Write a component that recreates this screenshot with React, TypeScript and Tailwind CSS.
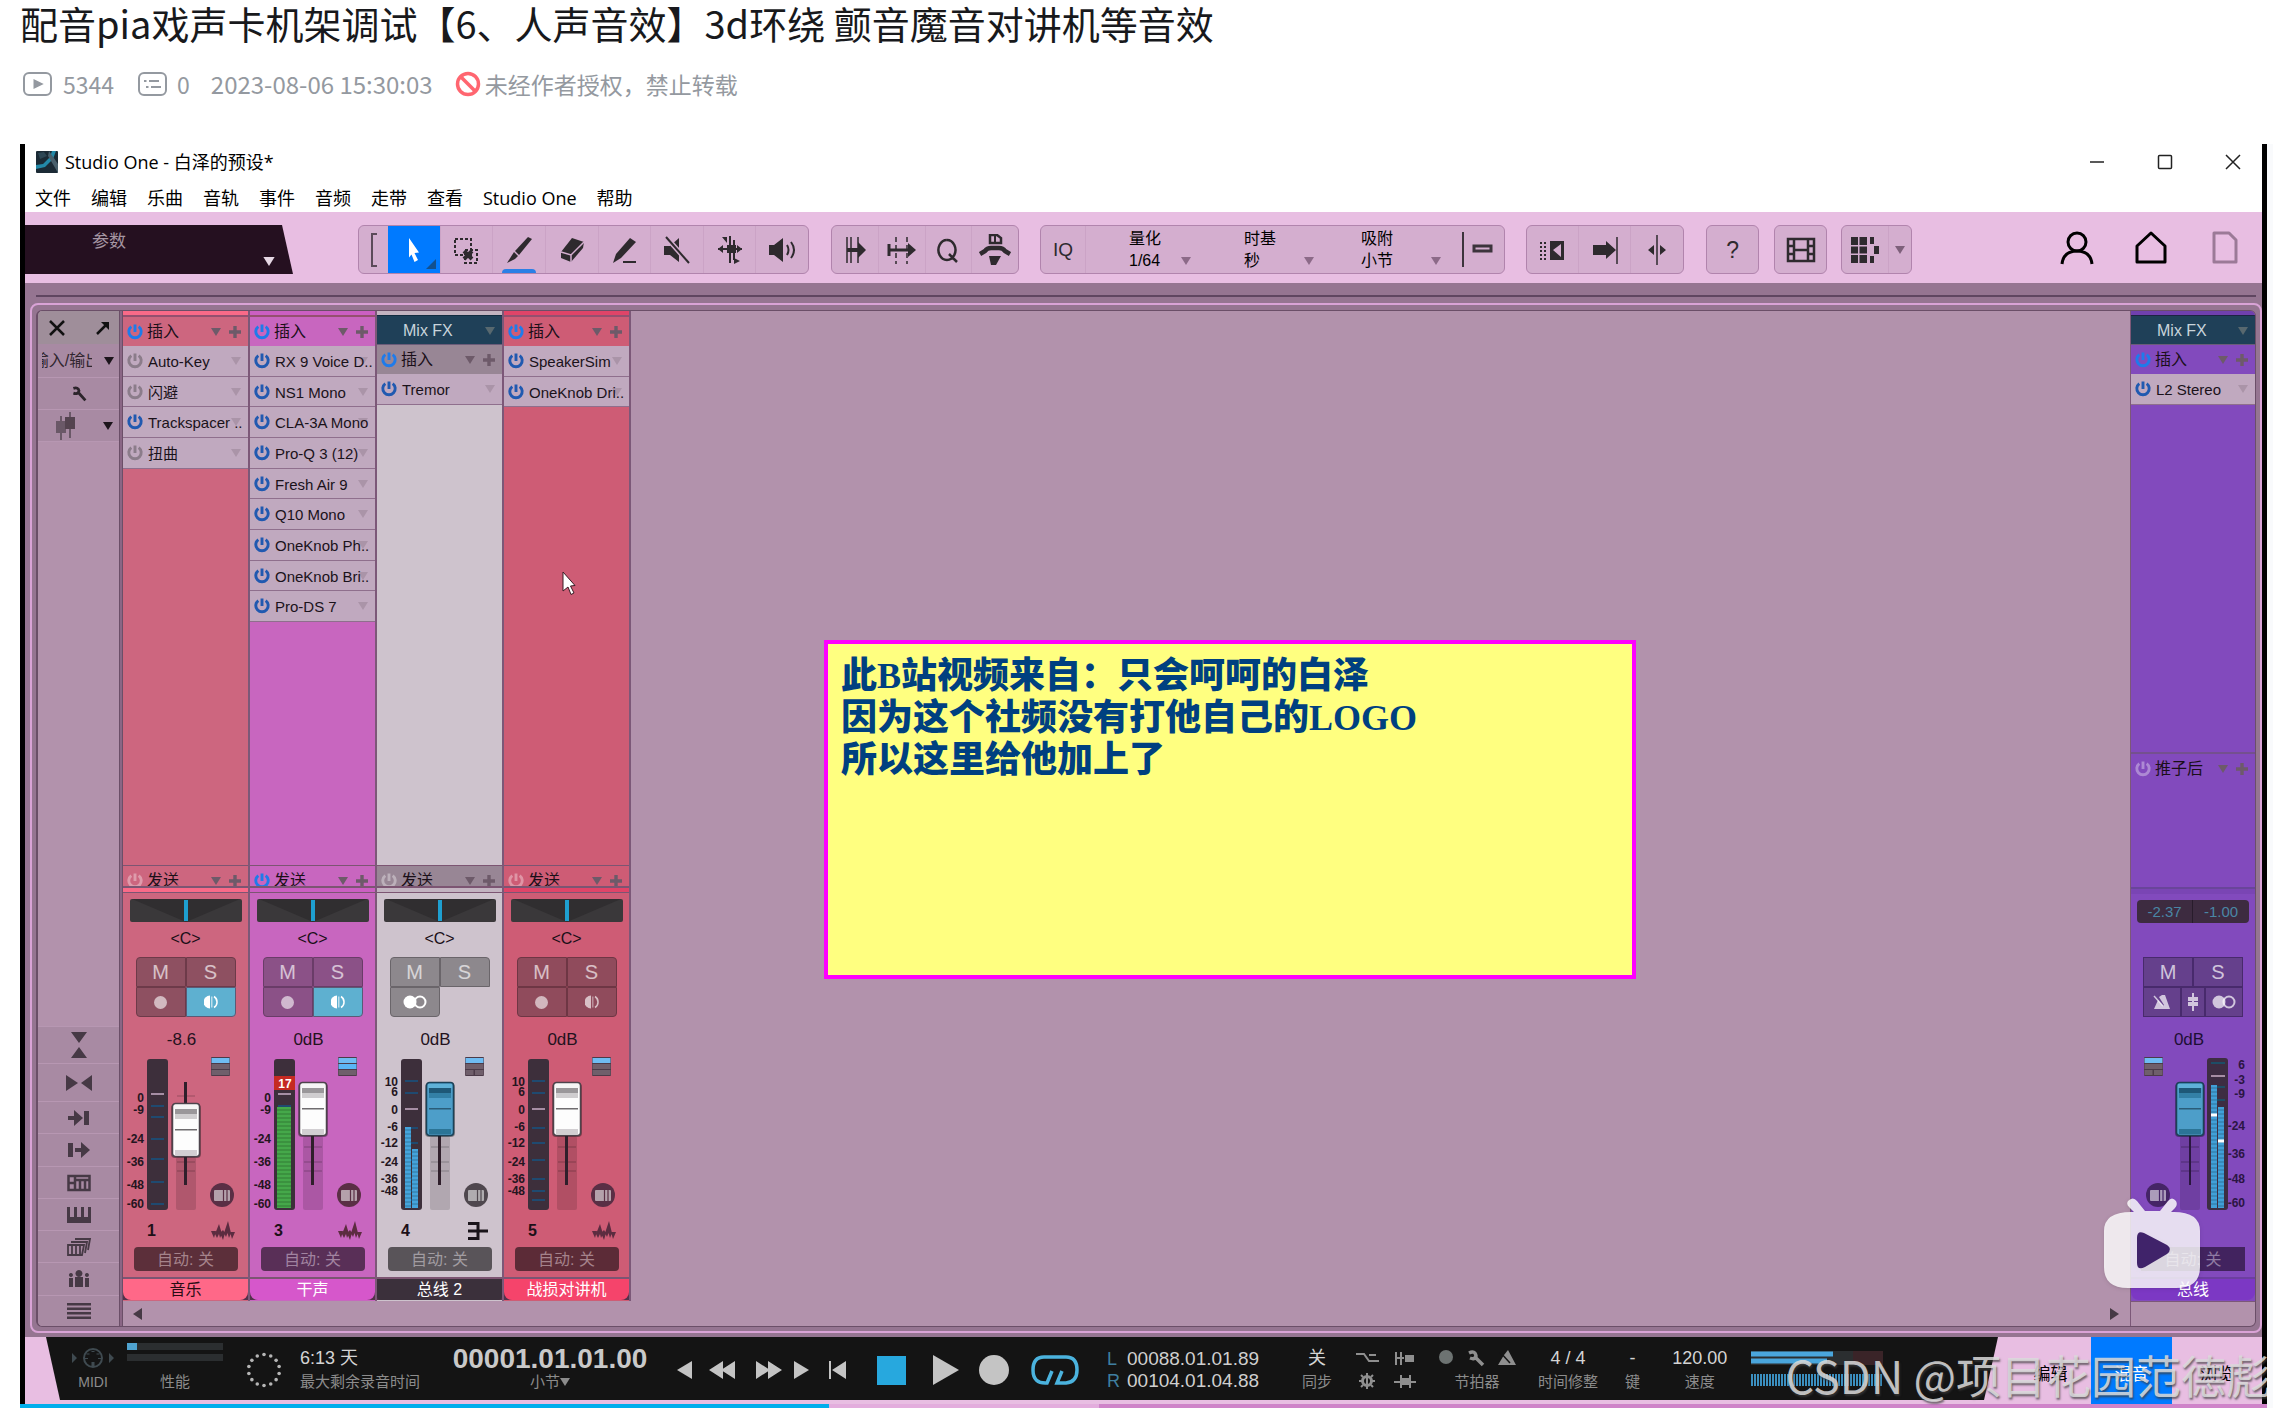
import React from "react";

const CJK = "font-['Noto_Sans_CJK_SC',sans-serif]";
const ARIAL = "font-['Liberation_Sans','Noto_Sans_CJK_SC',sans-serif]";

/* ---------- small glyphs ---------- */

function Power({ className }: { className: string }) {
  return (
    <svg viewBox="0 0 16 16" className={`h-4 w-4 shrink-0 ${className}`} fill="none" stroke="currentColor" strokeWidth="2.900">
      <path d="M4.300 2.600A6.200 6.200 0 1 0 11.700 2.600" />
      <path d="M8 0.500V8" />
    </svg>
  );
}

function Down({ className }: { className: string }) {
  return (
    <svg viewBox="0 0 10 8" className={`h-2 w-2.5 shrink-0 ${className}`} fill="currentColor">
      <path d="M0 0H10L5 8Z" />
    </svg>
  );
}

function Plus({ className }: { className: string }) {
  return (
    <svg viewBox="0 0 12 12" className={`h-3 w-3 shrink-0 ${className}`} fill="currentColor">
      <path d="M4.300 0H7.700V4.300H12V7.700H7.700V12H4.300V7.700H0V4.300H4.300Z" />
    </svg>
  );
}

function Wave() {
  return (
    <svg viewBox="0 0 24 20" className="h-5 w-6" fill="currentColor">
      <path d="M0 10H5L3 17ZM4 13L8 3L11 13L9 17L8 13L6 17ZM9 12L12 9L14 12L12 19ZM13 12L17 0L20 12L18 17L16.500 12L15 16ZM19 11H24L21 18Z" />
    </svg>
  );
}

function Bus() {
  return (
    <svg viewBox="0 0 24 20" className="h-5 w-6" fill="none" stroke="currentColor" strokeWidth="3">
      <path d="M3 2.500H13V17.500H3M3 10H23" />
    </svg>
  );
}

/* ---------- header ---------- */

function Heading() {
  return (
    <header className={`h-36 pl-5 ${CJK}`}>
      <h1 className="h-[46px] text-[38px] leading-[46px] whitespace-nowrap text-[#18191c]">
        配音pia戏声卡机架调试【6、人声音效】3d环绕 颤音魔音对讲机等音效
      </h1>
      <div className="mt-[23px] flex h-[30px] items-center pl-[3px] text-[23px] leading-[30px] whitespace-nowrap text-[#9499a0]">
        <svg viewBox="0 0 29 24" className="mr-[11px] h-6 w-[29px]" fill="none" stroke="currentColor" strokeWidth="2">
          <rect x="1" y="1" width="27" height="22" rx="5" />
          <path d="M11.500 8.500V15.500L18.500 12Z" fill="currentColor" />
        </svg>
        <span>5344</span>
        <svg viewBox="0 0 29 24" className="mr-[10px] ml-6 h-6 w-[29px]" fill="none" stroke="currentColor" strokeWidth="2">
          <rect x="1" y="1" width="27" height="22" rx="5" />
          <path d="M6 9H8.500M11 9H21M8 15H10.500M13 15H23" />
        </svg>
        <span>0</span>
        <time className="ml-[21px] text-[24px]">2023-08-06 15:30:03</time>
        <svg viewBox="0 0 26 26" className="mr-1 ml-[22px] h-[26px] w-[26px]" fill="none" stroke="#ff6670" strokeWidth="3.500">
          <circle cx="13" cy="13" r="10.500" />
          <path d="M6 6L20 20" />
        </svg>
        <span>未经作者授权，禁止转载</span>
      </div>
    </header>
  );
}

function TitleBar() {
  return (
    <div className="flex h-9 items-center bg-white pr-[21px] pl-[11px] text-black">
      <svg viewBox="0 0 22 22" className="h-[22px] w-[22px]">
        <rect width="22" height="22" rx="1" fill="#1b2a35" />
        <path d="M0 14L7 13L14 6L16 0H20L17 8L9 16L0 18Z" fill="#2389a8" />
        <path d="M13 0L22 13V22L18 15L12 5Z" fill="#49606d" />
        <path d="M2 2L8 1L11 5L4 8Z" fill="#2d4654" />
      </svg>
      <span className="ml-[7px] font-['Open_Sans','Noto_Sans_CJK_SC',sans-serif] text-[18px] leading-6">Studio One - 白泽的预设*</span>
      <div className="ml-auto flex items-center gap-[52px]">
        <button aria-label="最小化" className="flex h-4 w-4 items-center">
          <svg viewBox="0 0 16 16" className="h-4 w-4"><path d="M1 8H15" stroke="#222" strokeWidth="1.500" /></svg>
        </button>
        <button aria-label="最大化" className="h-4 w-4">
          <svg viewBox="0 0 16 16" className="h-4 w-4"><rect x="1.500" y="1.500" width="13" height="13" rx="1" fill="none" stroke="#222" strokeWidth="1.500" /></svg>
        </button>
        <button aria-label="关闭" className="h-4 w-4">
          <svg viewBox="0 0 16 16" className="h-4 w-4"><path d="M1 1L15 15M15 1L1 15" stroke="#222" strokeWidth="1.500" /></svg>
        </button>
      </div>
    </div>
  );
}

function MenuBar() {
  const items = ["文件", "编辑", "乐曲", "音轨", "事件", "音频", "走带", "查看", "Studio One", "帮助"];
  return (
    <nav className="flex h-8 items-center gap-5 bg-white pt-1 pl-[10px] font-['Open_Sans','Noto_Sans_CJK_SC',sans-serif] text-[18px] leading-6 text-black">
      {items.map((t) => (
        <button key={t} className="whitespace-nowrap">{t}</button>
      ))}
    </nav>
  );
}

/* ---------- toolbar ---------- */

const tools: { name: string; icon: React.ReactNode }[] = [
  {
    name: "箭头",
    icon: (
      <>
        <path d="M11 4L21 18.500L16.500 19L20 26L16.500 28L13.500 20.500L11 23.500Z" fill="#fff" stroke="none" />
      </>
    ),
  },
  {
    name: "范围",
    icon: (
      <>
        <path d="M5 5H21V21H5Z" strokeDasharray="3 2" fill="none" strokeWidth="2" />
        <path d="M15 16H27V29H15Z" strokeDasharray="3 2" fill="none" strokeWidth="2" />
        <path d="M14 17L22 25M22 17L14 25" strokeWidth="4" />
      </>
    ),
  },
  {
    name: "切割",
    icon: (
      <>
        <path d="M29 5L25 3L12 17L16 21Z" stroke="none" />
        <path d="M11 18L15 22L12 25L4 29Z" stroke="none" />
      </>
    ),
  },
  {
    name: "橡皮",
    icon: (
      <>
        <path d="M16 4L28 8L27 14L15 28L5 24L5 18Z" stroke="none" />
        <path d="M5 18L15 21L28 8M15 21V28" fill="none" stroke="#d4aecf" strokeWidth="1.500" />
      </>
    ),
  },
  {
    name: "绘制",
    icon: (
      <>
        <path d="M22 4L28 8L13 24L5 29L8 20Z" stroke="none" />
        <path d="M15 28H28" strokeWidth="2" />
      </>
    ),
  },
  {
    name: "静音",
    icon: (
      <>
        <path d="M3 12H9L18 4V28L9 21H3Z" stroke="none" />
        <path d="M5 3L28 29" stroke="#d4aecf" strokeWidth="5" />
        <path d="M5 3L28 29" strokeWidth="2" />
      </>
    ),
  },
  {
    name: "弯曲",
    icon: (
      <>
        <path d="M16 2V29M20 6V26M4 15H28" strokeWidth="2" />
        <path d="M4 15L9 11V19ZM28 15L23 11V19ZM8 3H13V9ZM20 24V30L26 27Z" stroke="none" />
        <path d="M13 11H22V19H13Z" stroke="none" />
      </>
    ),
  },
  {
    name: "试听",
    icon: (
      <>
        <path d="M3 11H8L17 4V28L8 21H3Z" stroke="none" />
        <path d="M21 11Q24 16 21 21M25 8Q31 16 25 24" fill="none" strokeWidth="2" />
      </>
    ),
  },
];

function ToolIcon({ children }: { children: React.ReactNode }) {
  return (
    <svg viewBox="0 0 32 32" className="h-8 w-8" fill="#2e2a2e" stroke="#2e2a2e" strokeWidth="2">
      {children}
    </svg>
  );
}

const group = "flex h-[49px] shrink-0 overflow-hidden rounded-md border border-[#b184ad] bg-[#d4aecf] text-[#2e2a2e]";
const cell = "flex items-center justify-center border-r border-[#cba3c6] last:border-r-0";

function SnapField({ label, value, className }: { label: string; value: string; className: string }) {
  return (
    <button className={`grid grid-cols-[auto_10px] content-center items-center text-left text-[16px] leading-[22px] text-black ${className}`}>
      <span>{label}</span>
      <span />
      <span>{value}</span>
      <Down className="text-[#8c6a88]" />
    </button>
  );
}

function Toolbar() {
  return (
    <div className={`flex h-[71px] items-start overflow-hidden bg-[#e8bee2] pt-[13px] ${ARIAL}`}>
      <button className="flex h-[49px] w-[268px] shrink-0 justify-between bg-[#251020] pt-[5px] pr-[17px] pb-[8px] pl-[67px] text-[17px] leading-6 text-[#a696a3] [clip-path:polygon(0_0,257px_0,268px_100%,0_100%)]">
        <span>参数</span>
        <Down className="mt-auto h-[9px] w-[14px] text-[#e6d8e4]" />
      </button>
      <div className={`ml-[65px] w-[451px] ${group}`}>
        <svg viewBox="0 0 29 47" className="h-[47px] w-[29px] shrink-0" fill="none" stroke="#5c4a5a" strokeWidth="2">
          <path d="M18 8H13V40H18" />
        </svg>
        {tools.map((t, i) => (
          <button
            key={t.name}
            aria-label={t.name}
            className={`relative flex-1 ${cell} ${i === 0 ? "bg-[#007aff]" : ""}`}
          >
            <ToolIcon>{t.icon}</ToolIcon>
            {i === 0 && (
              <svg viewBox="0 0 10 10" className="absolute right-1 bottom-1 h-2.5 w-2.5"><path d="M10 0V10H0Z" fill="#12508f" /></svg>
            )}
            {i === 2 && <span className="absolute bottom-0 h-1 w-[34px] rounded-t bg-[#2b7fe6]" />}
          </button>
        ))}
      </div>
      <div className={`ml-[22px] w-[188px] ${group}`}>
        <button aria-label="滚动" className={`flex-1 ${cell}`}>
          <ToolIcon><path d="M8 3V29M12 3V29M19 3V29" strokeWidth="1.500" /><path d="M8 14H19V8L27 16L19 24V18H8Z" stroke="none" /></ToolIcon>
        </button>
        <button aria-label="缩放" className={`flex-1 ${cell}`}>
          <ToolIcon><path d="M10 3V30M21 3V30" strokeDasharray="5 3" strokeWidth="1.500" /><path d="M3 10V22M3 16H24" strokeWidth="3" /><path d="M22 9L30 16L22 23Z" stroke="none" /></ToolIcon>
        </button>
        <button aria-label="量化 Q" className={`flex-1 ${cell}`}>
          <ToolIcon><path d="M15 6A8.500 10 0 1 1 14.900 6M17 20L25 28" fill="none" strokeWidth="2.500" /></ToolIcon>
        </button>
        <button aria-label="宏" className={`flex-1 ${cell}`}>
          <ToolIcon><path d="M11 1H18L22 4V9H11Z" fill="none" strokeWidth="2.500" /><path d="M16 2V9" /><path d="M1 20L6 17Q8 14 12 14H20Q24 14 26 17L31 20" fill="none" strokeWidth="4.500" /><path d="M10 22H22L17 31H12Z" stroke="none" /></ToolIcon>
        </button>
      </div>
      <div className={`ml-[21px] ${group}`}>
        <button className={`w-[45px] text-[19px] leading-6 ${cell}`}>IQ</button>
        <SnapField label="量化" value="1/64" className="ml-[43px] gap-x-5" />
        <SnapField label="时基" value="秒" className="ml-[53px] gap-x-7" />
        <SnapField label="吸附" value="小节" className="ml-[47px] gap-x-[38px]" />
        <button aria-label="吸附开关" className="ml-[11px] w-[52px]">
          <svg viewBox="0 0 52 47" className="h-[47px] w-[52px]" fill="none" stroke="#3c343c">
            <path d="M11 6V41" strokeWidth="2" />
            <rect x="22" y="20" width="17" height="5" strokeWidth="3" />
          </svg>
        </button>
      </div>
      <div className={`ml-[21px] ${group}`}>
        <button aria-label="自动滚动" className={`w-[52px] ${cell}`}>
          <ToolIcon><path d="M4 8V27M8 8V27" strokeDasharray="2 2" /><path d="M13 7H27V26H13ZM24 10L16 16L24 23Z" fillRule="evenodd" stroke="none" /></ToolIcon>
        </button>
        <button aria-label="光标跟随" className={`w-[52px] ${cell}`}>
          <ToolIcon><path d="M4 11H17V7L27 16L17 25V21H4Z" stroke="none" /><path d="M28 3V30" strokeWidth="1.500" /></ToolIcon>
        </button>
        <button aria-label="居中" className={`w-[52px] ${cell}`}>
          <ToolIcon><path d="M16 1V31" strokeWidth="1.500" /><path d="M13 11V21L7 16ZM19 11V21L25 16Z" stroke="none" /></ToolIcon>
        </button>
      </div>
      <div className={`ml-[22px] ${group}`}>
        <button className={`w-[51px] text-[23px] leading-7 ${cell}`}>?</button>
      </div>
      <div className={`ml-[15px] ${group}`}>
        <button aria-label="视频" className={`w-[51px] ${cell}`}>
          <ToolIcon>
            <path d="M3 5H29V27H3ZM9 5V27M23 5V27M9 16H23M3 12H9M3 20H9M23 12H29M23 20H29" fill="none" strokeWidth="2.500" />
          </ToolIcon>
        </button>
      </div>
      <div className={`ml-[14px] ${group}`}>
        <button aria-label="网格" className={`w-[47px] ${cell}`}>
          <ToolIcon><path d="M2 3H9V11H2ZM10.500 3H18V11H10.500ZM21 3H25V10H21ZM2 12.500H9V19.500H2ZM10.500 12.500H18V19.500H10.500ZM25 12H30V20H25ZM2 21H9V29H2ZM10.500 21H18V29H10.500ZM21 22H25V29H21Z" stroke="none" /></ToolIcon>
        </button>
        <button aria-label="网格选项" className={`w-[22px] ${cell}`}>
          <Down className="text-[#7d607a]" />
        </button>
      </div>
      <div className="mt-1 mr-[19px] ml-auto flex gap-[38px] pl-6">
        <button aria-label="用户">
          <svg viewBox="0 0 36 36" className="h-9 w-9" fill="none" stroke="#000" strokeWidth="3">
            <circle cx="18" cy="13" r="9" />
            <path d="M3 35C4 26 9 22 18 22S32 26 33 35" />
          </svg>
        </button>
        <button aria-label="主页">
          <svg viewBox="0 0 36 36" className="h-9 w-9" fill="none" stroke="#000" strokeWidth="3">
            <path d="M18 4L32 17V33H4V17Z" strokeLinejoin="round" />
          </svg>
        </button>
        <button aria-label="文档">
          <svg viewBox="0 0 36 36" className="h-9 w-9" fill="none" stroke="#9b7a97" strokeWidth="3">
            <path d="M7 4H22L29 11V33H7Z" strokeLinejoin="round" />
          </svg>
        </button>
      </div>
    </div>
  );
}

/* ---------- mixer sidebar ---------- */

const navIcons: { name: string; h: string; art: React.ReactNode }[] = [
  { name: "纵向收起", h: "h-[37px]", art: <path d="M4 1H20L12 12ZM4 27H20L12 16Z" /> },
  { name: "横向收起", h: "h-[38px]", art: <path d="M-1 6V22L11 14ZM25 6V22L14 14Z" /> },
  { name: "输入", h: "h-8", art: <path d="M1 12H7V6L16 14L7 22V16H1ZM17 7H22V21H17Z" /> },
  { name: "输出", h: "h-[33px]", art: <path d="M1 7H6V21H1ZM8 12H14V6L23 14L14 22V16H8Z" /> },
  { name: "外部设备", h: "h-8", art: <path d="M1.500 7H22.500V21H1.500ZM8 7V21M8 11H22.500M13 11V21M18 11V21M1.500 14H8" fill="none" stroke="currentColor" strokeWidth="2.500" /> },
  { name: "乐器", h: "h-8", art: <path d="M0 6H3V16H7V6H10V16H14V6H17V16H21V6H24V22H0Z" /> },
  { name: "通道库", h: "h-8", art: <path d="M1 12H17L15 22H1ZM5 12V22M9 12V22M13 12V22M4 9H20L18 20M8 6H23L21 17" fill="none" stroke="currentColor" strokeWidth="1.800" /> },
  { name: "编组", h: "h-[33px]", art: <path d="M8 12H16V22H8ZM2 13H6V22H2ZM18 13H22V22H18ZM12 5A3.500 3.500 0 1 1 11.900 5ZM4 8A2 2 0 1 1 3.900 8ZM20 8A2 2 0 1 1 19.900 8Z" /> },
  { name: "列表", h: "h-[31px]", art: <path d="M0 6H24V8.500H0ZM0 10.500H24V13H0ZM0 15H24V17.500H0ZM0 19.500H24V22H0Z" /> },
];

function Sidebar() {
  const row = "flex items-center border-b border-[#b797b2] bg-[#a88aa3]";
  return (
    <aside className="flex w-[81px] shrink-0 flex-col text-[#30262f]">
      <div className="flex h-[33px] items-center justify-between bg-[#9f8e9a] pr-2 pl-[10px]">
        <button aria-label="关闭混音台" className="h-[18px] w-[18px]">
          <svg viewBox="0 0 18 18" className="h-[18px] w-[18px]" stroke="#111" strokeWidth="2.500"><path d="M2 2L16 16M16 2L2 16" /></svg>
        </button>
        <button aria-label="分离窗口" className="h-4 w-4">
          <svg viewBox="0 0 16 16" className="h-4 w-4" stroke="#111" strokeWidth="2.500"><path d="M2 14L12 4" /><path d="M6 2H14V10Z" fill="#111" stroke="none" /></svg>
        </button>
      </div>
      <button className={`h-[34px] ${row} ${ARIAL}`}>
        <span className="ml-1 flex w-[50px] justify-center overflow-hidden text-[16px] leading-6 whitespace-nowrap">输入/输出</span>
        <Down className="ml-auto mr-[5px] text-[#1c141b]" />
      </button>
      <button aria-label="设置" className={`h-8 justify-center ${row}`}>
        <svg viewBox="0 0 20 20" className="h-4 w-4" fill="none" stroke="#2c242b" strokeWidth="3.500"><path d="M3 3Q9 1 10 6Q9 11 3 9M10 9L18 18" /></svg>
      </button>
      <button aria-label="推子视图" className={`h-8 ${row}`}>
        <svg viewBox="0 0 24 28" className="ml-[17px] h-7 w-6" fill="#6a5867" stroke="#6a5867" strokeWidth="2">
          <path d="M6 4V28M15 0V26" /><rect x="2" y="10" width="8" height="10" /><rect x="11" y="6" width="8" height="10" fill="#54434f" stroke="#54434f" />
        </svg>
        <Down className="ml-auto mr-[6px] text-[#1c141b]" />
      </button>
      <div className="flex-1" />
      {navIcons.map((n) => (
        <button key={n.name} aria-label={n.name} className={`flex items-center justify-center border-t border-[#b797b2] bg-[#a88aa3] ${n.h}`}>
          <svg viewBox="-1 0 26 28" className="h-7 w-[26px] text-[#463945]" fill="currentColor">{n.art}</svg>
        </button>
      ))}
    </aside>
  );
}

/* ---------- channel strips ---------- */

type Scale = [string, number][];

const scaleLow: Scale = [["0", 42], ["-9", 54], ["-24", 83], ["-36", 106], ["-48", 129], ["-60", 148]];
const scaleBus: Scale = [["10", 26], ["6", 36], ["0", 54], ["-6", 71], ["-12", 87], ["-24", 106], ["-36", 123], ["-48", 135]];
const ticksLow = [49, 60, 82, 102, 125, 147];
const ticksBus = [24, 36, 71, 86, 103, 122, 134, 143];

interface Strip {
  name: string;
  num: string;
  body: string;
  stripe: string;
  header: string;
  label: string;
  pad: string;
  auto: string;
  mixFx?: boolean;
  bus?: boolean;
  sendOn?: boolean;
  monitor?: boolean;
  menuRows: number;
  inserts: [string, boolean][];
  value: string;
  cap: number;
  blueCap?: boolean;
  scale: Scale;
  ticks: number[];
  zero: number;
  meter: "none" | "green" | "blue";
}

const strips: Strip[] = [
  {
    name: "音乐", num: "1", body: "bg-[#cd667f]", stripe: "bg-[#f96a88]", header: "bg-[#cd667f]",
    label: "bg-[#ff6888] text-[#2a0c14] rounded-b-lg", pad: "bg-[#8e5061] border-[#6d3a49]", auto: "bg-[#5c2f3a] text-[#a5838b]",
    monitor: true, menuRows: 1,
    inserts: [["Auto-Key", false], ["闪避", false], ["Trackspacer ..", true], ["扭曲", false]],
    value: "-8.6", cap: 47, scale: scaleLow, ticks: ticksLow, zero: 38, meter: "none",
  },
  {
    name: "干声", num: "3", body: "bg-[#c866bf]", stripe: "bg-[#cb5fc2]", header: "bg-[#c866bf]",
    label: "bg-[#d657cb] text-white rounded-b-lg", pad: "bg-[#8b5187] border-[#6a3c68]", auto: "bg-[#592f57] text-[#a183a0]",
    monitor: true, sendOn: true, menuRows: 2,
    inserts: [["RX 9 Voice D..", true], ["NS1 Mono", true], ["CLA-3A Mono", true], ["Pro-Q 3 (12)", true], ["Fresh Air 9", true], ["Q10 Mono", true], ["OneKnob Ph..", true], ["OneKnob Bri..", true], ["Pro-DS 7", true]],
    value: "0dB", cap: 26, scale: scaleLow, ticks: ticksLow, zero: 38, meter: "green",
  },
  {
    name: "总线 2", num: "4", body: "bg-[#cec3cd]", stripe: "bg-[#c3b4c1]", header: "bg-[#988695]",
    label: "bg-[#3b303b] text-white rounded-b-sm", pad: "bg-[#8d888d] border-[#6a656a]", auto: "bg-[#595459] text-[#a19ca1]",
    mixFx: true, bus: true, menuRows: 1,
    inserts: [["Tremor", true]],
    value: "0dB", cap: 26, blueCap: true, scale: scaleBus, ticks: ticksBus, zero: 53, meter: "blue",
  },
  {
    name: "战损对讲机", num: "5", body: "bg-[#ce5c75]", stripe: "bg-[#e04468]", header: "bg-[#ce5c75]",
    label: "bg-[#f5446b] text-white rounded-b-lg", pad: "bg-[#904b5c] border-[#6e3644]", auto: "bg-[#5c2b37] text-[#a5828b]",
    menuRows: 1,
    inserts: [["SpeakerSim", true], ["OneKnob Dri..", true]],
    value: "0dB", cap: 26, scale: scaleBus, ticks: ticksBus, zero: 53, meter: "none",
  },
];

function RackHeader({ text, on, className }: { text: string; on: boolean; className: string }) {
  return (
    <div className={`flex h-[29px] shrink-0 items-center pr-[7px] pl-1 text-[16px] leading-6 text-[#1a0f18] ${className}`}>
      <button aria-label={`${text}开关`} className="flex"><Power className={on ? "text-[#1f7bea]" : "text-white/35"} /></button>
      <span className="ml-1">{text}</span>
      <button aria-label={`${text}菜单`} className="ml-auto flex"><Down className="text-[#6d5a69]" /></button>
      <button aria-label={`添加${text}`} className="ml-2 flex"><Plus className="text-[#6d5a69]" /></button>
    </div>
  );
}

function Inserts({ items }: { items: [string, boolean][] }) {
  return (
    <ul className="[&>li:nth-child(3n+2)]:h-[30px]">
      {items.map(([name, on]) => (
        <li key={name} className="relative flex h-[31px] items-center overflow-hidden border-b border-[#8f6f8d] bg-[#c0a9bf] pl-1 text-[15px] leading-6 text-[#1a121a]">
          <button aria-label={`${name} 开关`} className="flex"><Power className={on ? "text-[#2059b0]" : "text-[#8b7c8a]"} /></button>
          <Down className="absolute right-[7px] text-[#aa94a8]" />
          <button className="relative ml-[5px] pt-0.5 whitespace-nowrap">{name}</button>
        </li>
      ))}
    </ul>
  );
}

function MixFxBar() {
  return (
    <button className="relative flex h-[29px] w-full shrink-0 items-center border-b border-[#6b5c79] bg-[#1f4058] pt-0.5 pl-[26px] text-[16px] leading-6 text-[#c9d4dc]">
      Mix FX
      <Down className="absolute right-[7px] text-[#58686f]" />
    </button>
  );
}

function Pan() {
  return (
    <svg viewBox="0 0 112 23" className="mx-auto h-[23px] w-28 shrink-0">
      <rect width="112" height="23" rx="2" fill="#3a383a" />
      <path d="M2 0H110L56 23Z" fill="#302e30" />
      <rect x="54" y="1" width="4" height="21" fill="#1e9fd0" />
    </svg>
  );
}

function MonitorIcon() {
  return (
    <svg viewBox="0 0 14 14" className="h-3.5 w-3.5" fill="currentColor">
      <path d="M6 0.500A6.500 6.500 0 0 0 6 13.500Z" />
      <path d="M7 1.500H8.500V12.500H7Z" opacity=".6" />
      <path d="M10 1.500A6.500 6.500 0 0 1 10 12.500" fill="none" stroke="currentColor" strokeWidth="1.500" />
    </svg>
  );
}

function MonoIcon() {
  return (
    <svg viewBox="0 0 24 14" className="h-3.5 w-6">
      <circle cx="7" cy="7" r="6.500" fill="currentColor" />
      <circle cx="17" cy="7" r="5.500" fill="none" stroke="currentColor" strokeWidth="2" />
    </svg>
  );
}

function Pads({ s }: { s: Strip }) {
  const b = `flex items-center justify-center border ${s.pad}`;
  return (
    <div className="mx-auto mt-[9px] grid h-[60px] w-[100px] shrink-0 grid-cols-2 grid-rows-2 text-[20px] leading-6 text-white/65">
      <button className={`rounded-tl-sm ${b}`}>M</button>
      <button className={`rounded-tr-sm ${b}`}>S</button>
      {s.bus ? (
        <button aria-label="单声道" className={`rounded-b-sm text-white ${b}`}><MonoIcon /></button>
      ) : (
        <>
          <button aria-label="录音" className={`rounded-bl-sm ${b}`}><span className="h-[13px] w-[13px] rounded-full bg-white/60" /></button>
          {s.monitor ? (
            <button aria-label="监听" className="flex items-center justify-center rounded-br-sm border border-[#5b5a76] bg-[#5eb0d0] text-white"><MonitorIcon /></button>
          ) : (
            <button aria-label="监听" className={`rounded-br-sm ${b}`}><MonitorIcon /></button>
          )}
        </>
      )}
    </div>
  );
}

function Cap({ x, y, blue }: { x: number; y: number; blue?: boolean }) {
  return (
    <g transform={`translate(${x} ${y})`}>
      <rect x="-1" y="1" width="30" height="54" rx="4" fill="#000" opacity=".35" />
      <rect x="0.500" y="0.500" width="27" height="53" rx="3" fill={blue ? "#4d9ec9" : "#fdfdfd"} stroke={blue ? "#1b4258" : "#4d444c"} strokeWidth="1.500" />
      <rect x="2" y="2" width="24" height="4" fill={blue ? "#5fb2d8" : "#f6f6f6"} />
      <rect x="3" y="6" width="22" height="5" fill={blue ? "#1e5877" : "#9a979a"} />
      <rect x="3" y="11" width="22" height="5" fill={blue ? "#3380a6" : "#cfcdcf"} />
      <rect x="3" y="26" width="22" height="1.500" fill={blue ? "#2a5c78" : "#6f6c6f"} />
      <rect x="3" y="47" width="22" height="5" fill={blue ? "#2b7496" : "#d2cfd2"} />
    </g>
  );
}

function Rows({ x, y, rows, split }: { x: number; y: number; rows: number; split?: boolean }) {
  return (
    <g transform={`translate(${x} ${y})`}>
      <rect width="19" height="19" rx="1" fill="#4c3b49" />
      <rect x="0.500" y="1" width="18" height="5" fill="#6fbcf2" />
      <rect x="0.500" y="7" width="18" height="5" fill={rows > 1 ? "#5bb6f5" : "#6f5f6b"} />
      <rect x="0.500" y="13" width={split ? 8 : 18} height="5" fill="#6f5f6b" />
      {split && <rect x="10" y="13" width="8.500" height="5" fill="#6f5f6b" />}
    </g>
  );
}

function Knob({ x, y, fill }: { x: number; y: number; fill: string }) {
  return (
    <g transform={`translate(${x} ${y})`}>
      <circle r="12" fill={fill} />
      <rect x="-8" y="-5" width="16" height="11" rx="1" fill="#fff" opacity=".55" />
      <path d="M1.500 -5V6M5 -5V6" stroke={fill} strokeWidth="1.200" />
    </g>
  );
}

function Bar({ x, y, bottom, w, fill }: { x: number; y: number; bottom: number; w: number; fill: string }) {
  const lines = [];
  for (let k = y + 3; k < bottom; k += 4) lines.push(`M${x} ${k}h${w}`);
  return (
    <>
      <rect x={x} y={y} width={w} height={bottom - y} fill={fill} />
      <path d={lines.join("")} stroke="#000" strokeOpacity=".28" />
    </>
  );
}

function Fader({ s }: { s: Strip }) {
  return (
    <div className="relative mt-[6px] h-40 w-[125px] shrink-0">
      <svg viewBox="0 0 125 160" className="h-40 w-[125px]">
        {s.scale.map(([t, y]) => (
          <text key={t} x="21" y={y + 4} textAnchor="end" className="fill-[#241520] font-['Liberation_Sans',sans-serif] text-[12px] font-bold">{t}</text>
        ))}
        <rect x="24" y="3" width="21" height="151" rx="3" fill="#3d2f3b" />
        {s.ticks.map((y) => <rect key={y} x="28" y={y} width="13" height="2" fill="#1f4a70" />)}
        <rect x="28" y={s.zero - 1} width="13" height="2" fill="#a68ea4" />
        {s.meter === "green" && (
          <>
            <rect x="24" y="20" width="21" height="14" fill="#c52a22" />
            <text x="35" y="32" textAnchor="middle" className="fill-white font-['Liberation_Sans',sans-serif] text-[12px] font-bold">17</text>
            <Bar x={27} y={51} bottom={152} w={14} fill="#45a84a" />
          </>
        )}
        {s.meter === "blue" && (
          <>
            <Bar x={28} y={71} bottom={152} w={6} fill="#45a4dc" />
            <Bar x={35} y={93} bottom={152} w={6} fill="#45a4dc" />
          </>
        )}
        <rect x="53" y={s.cap + 54} width="20" height={154 - s.cap - 54} fill="#000" opacity=".14" rx="2" />
        <path d="M54 91H72M54 106H72M54 115H72M54 40H72" stroke="#000" strokeOpacity=".25" />
        <rect x="61" y="26" width="3" height="103" fill="#2f1f2b" />
        <Cap x={49} y={s.cap} blue={s.blueCap} />
        <Rows x={88} y={1} rows={s.menuRows} split={s.bus} />
        <Knob x={99} y={139} fill={s.bus ? "#4f474e" : "#5a2f45"} />
      </svg>
      <input
        type="range"
        aria-label={`${s.name} 推子`}
        className="absolute top-6 left-12 h-[110px] w-[30px] opacity-0 [writing-mode:vertical-lr]"
      />
    </div>
  );
}

function Channel({ s }: { s: Strip }) {
  return (
    <section className={`mr-0.5 flex w-[125px] shrink-0 flex-col ${s.body}`}>
      <div className={`h-1 shrink-0 ${s.stripe}`} />
      {s.mixFx ? <><div className="h-px bg-[#122c40]" /><MixFxBar /></> : <div className="h-0.5 shrink-0 bg-[#94506f]" />}
      <RackHeader text="插入" on className={s.header} />
      <Inserts items={s.inserts} />
      <div className="flex-1" />
      <div className={`h-[21px] shrink-0 overflow-hidden border-t border-[#7c5572] ${s.header}`}>
        <RackHeader text="发送" on={!!s.sendOn} className="" />
      </div>
      <div className={`h-[7px] shrink-0 border-t-2 border-b border-[#7c5572] ${s.stripe}`} />
      <div className="h-[6px] shrink-0" />
      <Pan />
      <div className="mt-2 h-[18px] shrink-0 text-center text-[16px] leading-[18px] text-[#1a0f18]">&lt;C&gt;</div>
      <Pads s={s} />
      <output className="mt-[13px] h-5 shrink-0 pr-2 text-center text-[17px] leading-5 text-[#24121d]">{s.value}</output>
      <Fader s={s} />
      <div className="mt-[3px] flex h-6 shrink-0 items-center justify-between pr-[13px] pl-6 text-[16px] leading-6 font-bold text-[#1d1018]">
        {s.num}
        <span className={s.bus ? "text-[#1a141a]" : "text-[#5c2c40]"}>{s.bus ? <Bus /> : <Wave />}</span>
      </div>
      <button className={`mx-auto mt-1 h-6 w-[104px] shrink-0 rounded-sm text-[16px] leading-[26px] ${s.auto}`}>自动: 关</button>
      <div className="mt-[6px] h-0.5 shrink-0 bg-[#7c5572]" />
      <div className="mb-px shrink-0 bg-[#54324b]">
        <button className={`block h-[21px] w-full text-center text-[16px] leading-[21px] ${s.label}`}>{s.name}</button>
      </div>
    </section>
  );
}

const mainScale: Scale = [["6", 9], ["-3", 24], ["-9", 38], ["-24", 70], ["-36", 98], ["-48", 123], ["-60", 147]];

function MainChannel() {
  const b = "flex items-center justify-center border border-[#482a6c] bg-[#65408c]";
  return (
    <section className="flex flex-1 flex-col bg-[#824abd]">
      <div className="h-1 shrink-0 bg-[#7040ae]" />
      <div className="h-px shrink-0 bg-[#1d2444]" />
      <MixFxBar />
      <RackHeader text="插入" on className="" />
      <Inserts items={[["L2 Stereo", true]]} />
      <div className="flex-1" />
      <div className="h-[135px] shrink-0 border-t-2 border-[#74508f]">
        <RackHeader text="推子后" on={false} className="" />
      </div>
      <div className="h-[7px] shrink-0 border-t-2 border-[#69459a] bg-[#7a45b4]" />
      <div className="mx-auto mt-[6px] grid h-[23px] w-28 shrink-0 grid-cols-2 rounded-sm bg-[#3d2b40] text-center text-[15px] leading-[23px] text-[#4a86a5]">
        <output className="border-r border-[#281c2b]">-2.37</output>
        <output>-1.00</output>
      </div>
      <div className="mx-auto mt-[34px] h-[61px] w-[100px] shrink-0 text-[20px] leading-6 text-white/70">
        <div className="grid h-[30px] grid-cols-2">
          <button className={b}>M</button>
          <button className={b}>S</button>
        </div>
        <div className="grid h-[30px] grid-cols-[38px_24px_38px]">
          <button aria-label="节拍器" className={b}>
            <svg viewBox="0 0 18 16" className="h-4 w-[18px]" fill="currentColor"><path d="M6 3L9 1H12L17 15H1L5 6L10 12L11 11Z" /><path d="M1 2L10 12" stroke="currentColor" strokeWidth="1.500" /></svg>
          </button>
          <button aria-label="推子" className={b}>
            <svg viewBox="0 0 12 18" className="h-[18px] w-3" fill="currentColor"><path d="M5 0H7V18H5ZM1 4H11V8H1ZM1 9H11V13H1Z" /></svg>
          </button>
          <button aria-label="单声道" className={b}><MonoIcon /></button>
        </div>
      </div>
      <output className="mt-3 h-5 shrink-0 pr-2 text-center text-[17px] leading-5 text-[#1d0f35]">0dB</output>
      <div className="relative mt-[6px] h-40 w-[124px] shrink-0">
        <svg viewBox="0 0 124 160" className="h-40 w-[124px]">
          {mainScale.map(([t, y]) => (
            <text key={t} x="114" y={y + 4} textAnchor="end" className="fill-[#2b1543] font-['Liberation_Sans',sans-serif] text-[12px] font-bold">{t}</text>
          ))}
          <rect x="76" y="2" width="21" height="152" rx="3" fill="#3d2d42" />
          <path d="M80 7H94M80 31H94M80 44H94" stroke="#1d4d66" strokeWidth="2" />
          <path d="M80 20H94" stroke="#a68ea4" strokeWidth="2" />
          <Bar x={80} y={29} bottom={152} w={6} fill="#41a0d8" />
          <Bar x={87} y={51} bottom={152} w={6} fill="#41a0d8" />
          <path d="M80 59H86M87 85H93" stroke="#fff" strokeWidth="3" />
          <rect x="49" y="80" width="20" height="74" fill="#000" opacity=".14" rx="2" />
          <path d="M50 91H68M50 106H68M50 115H68" stroke="#000" strokeOpacity=".3" />
          <rect x="58" y="70" width="2" height="59" fill="#2a1740" />
          <Cap x={45} y={26} blue />
          <Rows x={13} y={1} rows={1} split />
          <Knob x={27} y={139} fill="#452566" />
        </svg>
        <input
          type="range"
          aria-label="总线 推子"
          className="absolute top-6 left-11 h-[110px] w-[30px] opacity-0 [writing-mode:vertical-lr]"
        />
      </div>
      <button className="mx-auto mt-[31px] h-6 w-[104px] shrink-0 bg-[#42235f] text-[16px] leading-[26px] text-[#8f7ba3]">自动: 关</button>
      <div className="mt-[6px] h-0.5 shrink-0 bg-[#6c3fa0]" />
      <button className="mb-px h-[21px] shrink-0 rounded-b-lg bg-[#7c38c4] text-center text-[16px] leading-[21px] text-white">总线</button>
    </section>
  );
}

function Note() {
  return (
    <div className="absolute top-[329px] left-[701px] h-[339px] w-[812px] border-4 border-[#ff00ff] bg-[#ffff80] px-[13px] pt-[11px] font-['Liberation_Serif','Noto_Sans_CJK_SC',serif] text-[36px] leading-[42px] font-black text-[#004080]">
      <p>此B站视频来自：只会呵呵的白泽</p>
      <p>因为这个社频没有打他自己的LOGO</p>
      <p>所以这里给他加上了</p>
    </div>
  );
}

function Mixer() {
  return (
    <main className={`flex flex-1 flex-col bg-[#957591] pr-0 pb-1 pl-[5px] ${ARIAL}`}>
      <div className="mt-3 mr-[6px] ml-[6px] h-0.5 bg-[#5f4660]" />
      <div className="mt-[6px] flex flex-1 rounded-lg border-2 border-[#d9a3d6] px-1 pt-[5px] pb-1">
        <div className="flex flex-1 overflow-hidden rounded-md border border-l-2 border-[#6b4f68] bg-[#b292ac]">
          <Sidebar />
          <div className="w-1 shrink-0 border-x border-[#6b4f68] bg-[#8a6685]" />
          <div className="flex min-w-0 flex-1 flex-col">
            <div className="relative flex flex-1">
              <div className="flex bg-[#7c5878]">
                {strips.map((s) => <Channel key={s.num} s={s} />)}
              </div>
              <svg viewBox="0 0 16 24" className="absolute top-[260px] left-[439px] h-6 w-4">
                <path d="M1 1L13 14.500L8.500 15L12 22L9 23.500L6 16L1 20Z" fill="#fff" stroke="#3a1c26" />
              </svg>
              <Note />
            </div>
            <div className="flex h-[25px] items-center justify-between pr-[11px] pl-[10px] text-[#463945]">
              <button aria-label="向左滚动" className="flex"><svg viewBox="0 0 9 12" className="h-3 w-[9px]" fill="currentColor"><path d="M9 0V12L0 6Z" /></svg></button>
              <button aria-label="向右滚动" className="flex"><svg viewBox="0 0 9 12" className="h-3 w-[9px]" fill="currentColor"><path d="M0 0V12L9 6Z" /></svg></button>
            </div>
          </div>
          <div className="flex w-[125px] shrink-0 flex-col border-l border-[#7c5878]">
            <MainChannel />
            <div className="h-[25px] border-t border-[#7c5878]" />
          </div>
        </div>
      </div>
    </main>
  );
}

/* ---------- transport ---------- */

function Stack({ top, bottom, className }: { top: React.ReactNode; bottom: React.ReactNode; className: string }) {
  return (
    <div className={`flex shrink-0 flex-col items-center whitespace-nowrap ${className}`}>
      <div className="flex h-6 items-center text-[18px] leading-6 text-[#d4d4d4]">{top}</div>
      <div className="h-6 text-[15px] leading-6 text-[#8c8c8c]">{bottom}</div>
    </div>
  );
}

function Tp({ name, w, d, className }: { name: string; w: number; d: string; className: string }) {
  return (
    <button aria-label={name} className={`flex shrink-0 ${className}`}>
      <svg viewBox={`0 0 ${w} 30`} width={w} height="30" fill="#c4c4c4"><path d={d} /></svg>
    </button>
  );
}

function Transport() {
  const dots = Array.from({ length: 14 }, (_, i) => (i * Math.PI * 2) / 14);
  return (
    <footer className={`flex h-[67px] bg-[#e8bee2] ${ARIAL}`}>
      <div className="ml-[21px] flex h-[63px] min-w-0 flex-1 items-center overflow-hidden bg-[#141414] pt-[3px] [clip-path:polygon(0_0,100%_0,calc(100%-14px)_100%,14px_100%)]">
        <Stack
          className="ml-[26px] w-[42px]"
          top={
            <svg viewBox="0 0 42 22" className="h-[22px] w-[42px]" fill="none" stroke="#3f4a50" strokeWidth="2">
              <circle cx="21" cy="11" r="9" />
              <path d="M0 6V16L5 11ZM37 6V16L42 11Z" fill="#3f4a50" stroke="none" />
              <path d="M21 4V5M16 6.500V7.500M26 6.500V7.500M14.500 11V12M27.500 11V12M21 15V19" strokeWidth="3" />
            </svg>
          }
          bottom={<span className="text-[14px]">MIDI</span>}
        />
        <Stack
          className="ml-[13px] w-24"
          top={
            <div className="-mt-3 flex w-24 flex-col gap-1">
              <div className="h-[7px] bg-[#2b2e30]"><div className="h-full w-[10px] bg-[#4fa3d0]" /></div>
              <div className="h-[7px] bg-[#2b2e30]" />
            </div>
          }
          bottom="性能"
        />
        <svg viewBox="-18 -18 36 36" className="ml-[23px] h-9 w-9 shrink-0" fill="#b5b5b5">
          {dots.map((a) => <circle key={a} cx={Math.sin(a) * 15.5} cy={Math.cos(a) * 15.5} r="1.800" />)}
        </svg>
        <div className="ml-[18px] w-[120px] shrink-0 whitespace-nowrap">
          <div className="text-[18px] leading-6 text-[#d4d4d4]">6:13 天</div>
          <div className="text-[15px] leading-6 text-[#8c8c8c]">最大剩余录音时间</div>
        </div>
        <Stack
          className="ml-[32px] w-[196px]"
          top={<span className="pt-0.5 text-[28px] leading-7 font-bold text-[#c9c9c9]">00001.01.01.00</span>}
          bottom={<span className="flex items-center">小节<Down className="text-[#8c8c8c]" /></span>}
        />
        <Tp name="后退" w={16} className="ml-[29px]" d="M15 6V24L0 15Z" />
        <Tp name="快退" w={27} className="ml-4" d="M14 6V24L0 15ZM26 6V24L12 15Z" />
        <Tp name="快进" w={27} className="ml-[19px]" d="M1 6V24L15 15ZM13 6V24L27 15Z" />
        <Tp name="前进" w={16} className="ml-[11px]" d="M1 6V24L16 15Z" />
        <Tp name="归零" w={18} className="ml-5" d="M0 6H2V24H0ZM17 6V24L3 15Z" />
        <button aria-label="停止" className="ml-[30px] h-[29px] w-[29px] shrink-0 bg-[#27a8de]" />
        <Tp name="播放" w={26} className="ml-[27px]" d="M0 0V30L26 15Z" />
        <button aria-label="录音" className="ml-5 h-[30px] w-[30px] shrink-0 rounded-full bg-[#c4c4c4]" />
        <button aria-label="循环" className="ml-[22px] shrink-0">
          <svg viewBox="0 0 48 32" className="h-8 w-12" fill="none" stroke="#4bb3de" strokeWidth="3.500">
            <path d="M21 17L16 29Q2 30 2 16Q2 3 13 3H35Q46 3 46 16Q46 28 35 29H26L31 17" />
          </svg>
        </button>
        <div className="ml-7 grid shrink-0 grid-cols-[20px_auto] text-[19px] leading-[22px] text-[#cfcfcf]">
          <span className="text-[18px] text-[#3f7fa0]">L</span><span>00088.01.01.89</span>
          <span className="text-[18px] text-[#3f7fa0]">R</span><span>00104.01.04.88</span>
        </div>
        <Stack className="ml-[43px]" top="关" bottom="同步" />
        <svg viewBox="0 0 62 44" className="ml-[22px] h-11 w-[62px] shrink-0" fill="none" stroke="#8f8f8f" strokeWidth="2">
          <path d="M2 6H10L15 13H25M15 7H22" />
          <path d="M42 4V17M47 4V17M42 10H50" /><rect x="51" y="7" width="9" height="7" fill="#8f8f8f" stroke="none" />
          <circle cx="13" cy="33" r="4.500" strokeWidth="3" /><path d="M13 25V41M5 33H8M18 33H21M7 27L9 29M17 37L19 39M19 27L17 29M9 37L7 39" />
          <path d="M47 27V40M56 27V40M40 34H62" /><rect x="46" y="30" width="11" height="7" fill="#8f8f8f" stroke="none" />
        </svg>
        <Stack
          className="ml-[22px] w-[78px]"
          top={
            <svg viewBox="0 0 78 18" className="h-[18px] w-[78px]" fill="#8f8f8f">
              <circle cx="8" cy="8" r="7" fill="#6d7372" />
              <path d="M31 4Q37 1 38 7Q37 11 32 9M38 9L45 16" fill="none" stroke="#8f8f8f" strokeWidth="3.500" />
              <path d="M60 16L66 6L70 1L78 16Z" /><path d="M62 3L72 14" stroke="#141414" strokeWidth="1.500" />
            </svg>
          }
          bottom="节拍器"
        />
        <Stack className="ml-[22px]" top="4 / 4" bottom="时间修整" />
        <Stack className="ml-[27px]" top="-" bottom="键" />
        <Stack className="ml-[32px]" top="120.00" bottom="速度" />
        <svg viewBox="0 0 132 44" className="ml-6 h-11 w-[132px] shrink-0">
          <rect y="3" width="132" height="14" fill="#2b2e30" />
          <path d="M0 6H82M0 13H76" stroke="#4aa6dd" strokeWidth="5" />
          <path d="M102 3H132V17H102Z" fill="#3a2428" />
          <path d="M0 32H132" stroke="#3b8fc0" strokeWidth="12" strokeDasharray="2 1" />
        </svg>
      </div>
      <div className="flex h-full shrink-0 pl-[12px] text-[17px] leading-6">
        <button className="w-[81px] pt-2 text-black">编辑</button>
        <button className="w-[81px] bg-[#007aff] pt-2 text-white">混音</button>
        <button className="w-[90px] pt-2 text-black">浏览</button>
      </div>
    </footer>
  );
}

function BiliBadge() {
  return (
    <svg viewBox="0 0 96 92" className="absolute right-[67px] bottom-[119px] h-[92px] w-24 drop-shadow">
      <path
        fillRule="evenodd"
        fill="#fff"
        fillOpacity=".82"
        d="M24 4Q29 -1 33 4L41 14H56L64 4Q68 -1 72 4Q74 8 71 11L67 15Q96 14 96 34V70Q96 91 72 91H24Q0 91 0 70V34Q0 14 30 15L25 10Q22 7 24 4Z"
      />
      <path d="M33 41Q33 33 40 36L63 48Q69 52 63 57L41 70Q33 74 33 66Z" fill="#40236a" />
    </svg>
  );
}

export default function App() {
  return (
    <div className="flex min-h-screen flex-col overflow-x-hidden bg-white pb-[10px]">
      <Heading />
      <div className="flex flex-1 pl-5">
        <div className="relative flex min-w-0 flex-1 flex-col overflow-hidden">
          <div className="flex flex-1 flex-col border-x-[5px] border-black">
            <TitleBar />
            <MenuBar />
            <Toolbar />
            <Mixer />
            <Transport />
          </div>
          <div role="progressbar" aria-label="播放进度" aria-valuenow={36} className="flex h-1 bg-[#cf83c9]">
            <div className="w-[36%] bg-[#00aeec]" />
            <div className="w-[12%] bg-[#e3addd]" />
          </div>
          <BiliBadge />
          <div className={`pointer-events-none absolute -right-1 bottom-1 text-[45px] leading-[58px] whitespace-nowrap text-[#dcdcdc]/85 [text-shadow:1px_2px_2px_rgba(60,60,60,0.7)] ${CJK}`}>
            CSDN @项目花园范德彪
          </div>
        </div>
        <div className="w-[6px] bg-[#f9fafc]" />
      </div>
    </div>
  );
}
